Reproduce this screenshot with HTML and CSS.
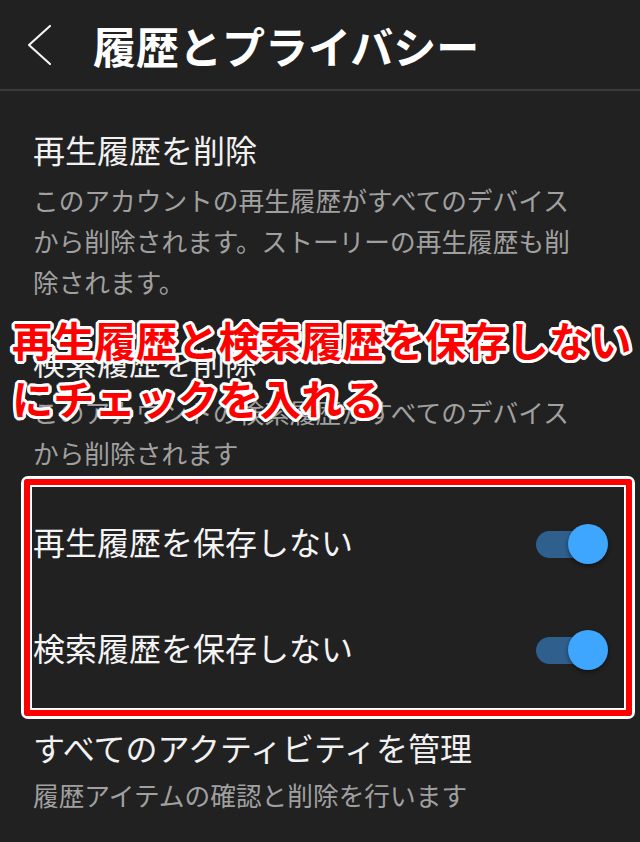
FILE: index.html
```html
<!DOCTYPE html>
<html lang="ja">
<head>
<meta charset="utf-8">
<title>履歴とプライバシー</title>
<link rel="stylesheet" href="styles.css">
</head>
<body>
<header class="topbar">
  <svg class="back" width="26" height="42" viewBox="0 0 26 42" aria-hidden="true">
    <polyline points="23,2 2,21 23,40" fill="none" stroke="#f2f2f2" stroke-width="2.2" stroke-linecap="round" stroke-linejoin="round"/>
  </svg>
  <h1 class="title">履歴とプライバシー</h1>
</header>
<main class="content">
  <section class="item first">
    <div class="item-title">再生履歴を削除</div>
    <div class="item-desc">このアカウントの再生履歴がすべてのデバイスから削除されます。ストーリーの再生履歴も削除されます。</div>
  </section>
  <section class="item second">
    <div class="item-title">検索履歴を削除</div>
    <div class="item-desc">このアカウントの検索履歴がすべてのデバイスから削除されます</div>
  </section>
  <div class="toggles">
    <div class="toggle-row">
      <span class="toggle-label">再生履歴を保存しない</span>
      <span class="switch"><span class="track"></span><span class="knob"></span></span>
    </div>
    <div class="toggle-row">
      <span class="toggle-label">検索履歴を保存しない</span>
      <span class="switch"><span class="track"></span><span class="knob"></span></span>
    </div>
  </div>
  <section class="item last">
    <div class="item-title">すべてのアクティビティを管理</div>
    <div class="item-desc">履歴アイテムの確認と削除を行います</div>
  </section>
</main>
<div class="note">再生履歴と検索履歴を保存しない<br>にチェックを入れる</div>
<div class="frame"></div>
</body>
</html>
```

FILE: styles.css
```css
html, body {
  margin: 0;
  padding: 0;
}
body {
  background: #212121;
  color: #f1f1f1;
  font-family: "Noto Sans CJK JP", "Noto Sans", sans-serif;
  width: 640px;
  height: 842px;
  overflow: hidden;
  position: relative;
}
.topbar {
  height: 89px;
  border-bottom: 2px solid #3a3a3a;
  display: flex;
  align-items: center;
  padding-left: 27px;
}
.back {
  display: block;
  margin-top: 1px;
}
.title {
  margin: 0 0 0 40px;
  font-size: 43px;
  font-weight: 700;
  line-height: 50px;
  color: #ffffff;
  letter-spacing: 0;
}
.content {
  padding: 0 32px 0 33px;
}
.item-title {
  font-size: 32px;
  line-height: 40px;
  color: #f1f1f1;
}
.item-desc {
  font-size: 25.7px;
  line-height: 41px;
  color: #a0a0a0;
  max-width: 548px;
  margin-top: 10px;
}
.item.first {
  margin-top: 38px;
}
.item.second {
  margin-top: 39px;
}
.toggles {
  margin-top: 18px;
}
.toggle-row {
  height: 106px;
  display: flex;
  align-items: center;
  justify-content: space-between;
}
.toggle-label {
  font-size: 32px;
  line-height: 40px;
  padding-bottom: 6px;
  color: #f4f4f4;
}
.switch {
  position: relative;
  width: 72px;
  height: 40px;
  flex: none;
}
.track {
  position: absolute;
  left: 0;
  top: 7px;
  width: 58px;
  height: 27px;
  border-radius: 14px;
  background: #2f5f8d;
}
.knob {
  position: absolute;
  right: 0;
  top: 0;
  width: 40px;
  height: 40px;
  border-radius: 50%;
  background: #3fa6ff;
  box-shadow: 0 2px 4px rgba(0, 0, 0, 0.45);
}
.item.last {
  margin-top: 24px;
}
.item.last .item-desc {
  margin-top: 7px;
}
.note {
  position: absolute;
  left: 12px;
  top: 310px;
  font-size: 41.3px;
  font-weight: 700;
  line-height: 58px;
  color: #ff0000;
  white-space: nowrap;
  text-shadow:
    3px 0 0 #fff, -3px 0 0 #fff, 0 3px 0 #fff, 0 -3px 0 #fff,
    2px 2px 0 #fff, -2px 2px 0 #fff, 2px -2px 0 #fff, -2px -2px 0 #fff,
    3px 1px 0 #fff, -3px 1px 0 #fff, 3px -1px 0 #fff, -3px -1px 0 #fff,
    1px 3px 0 #fff, -1px 3px 0 #fff, 1px -3px 0 #fff, -1px -3px 0 #fff;
}
.frame {
  position: absolute;
  left: 21px;
  top: 476px;
  width: 614px;
  height: 243px;
  box-sizing: border-box;
  border: 3px solid #ffffff;
  border-radius: 7px;
  pointer-events: none;
}
.frame::before {
  content: "";
  position: absolute;
  inset: 0;
  border: 6px solid #ff0000;
  border-radius: 3px;
}
.frame::after {
  content: "";
  position: absolute;
  inset: 6px;
  border: 2px solid #ffffff;
}
```
